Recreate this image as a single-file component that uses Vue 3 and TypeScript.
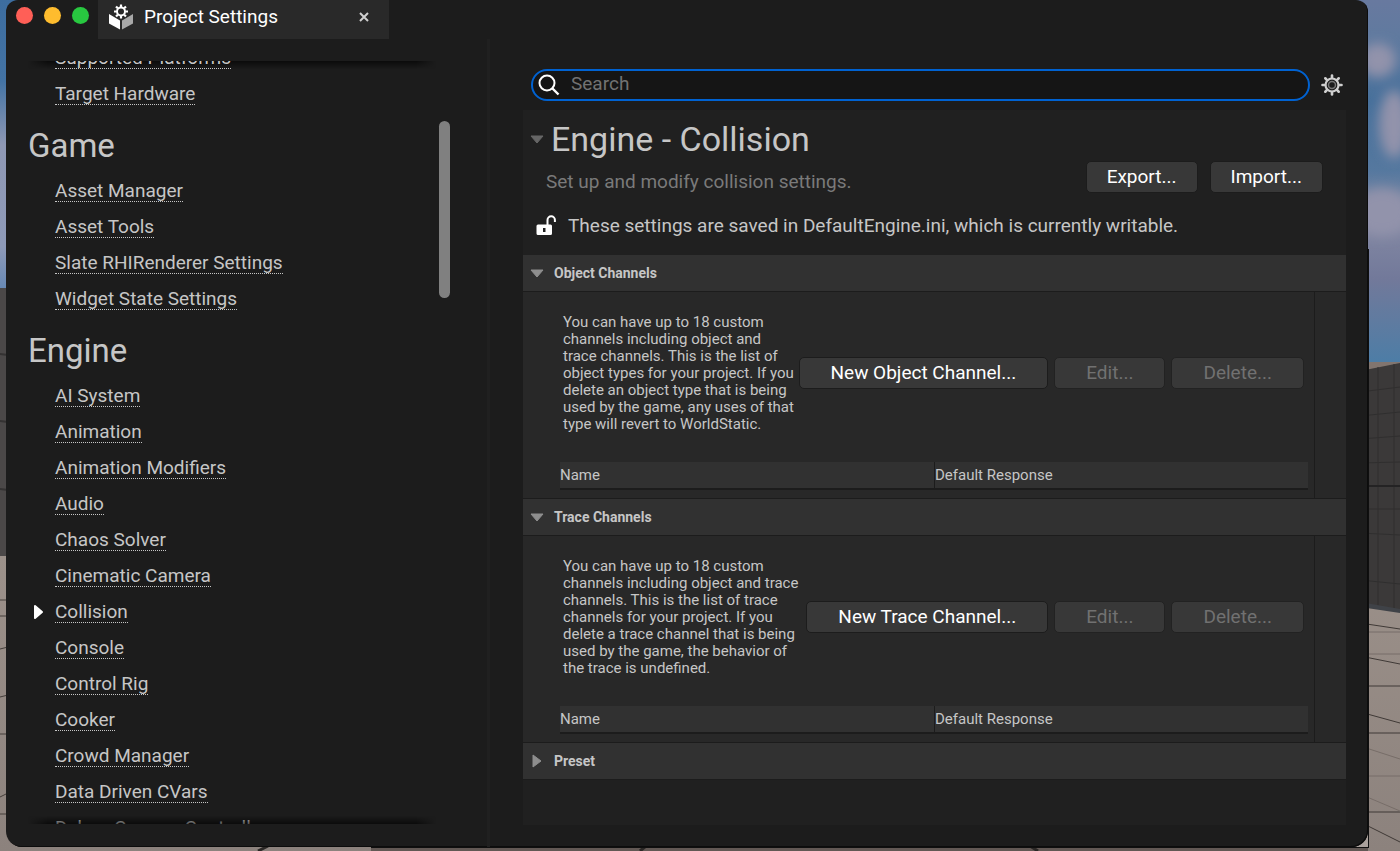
<script setup lang="ts">
import { onMounted, ref } from 'vue'

interface NavGroup {
  title: string
  items: string[]
}

interface ChannelSection {
  title: string
  description: string
  createLabel: string
}

const platformItems = ['Supported Platforms', 'Target Hardware']

const groups: NavGroup[] = [
  {
    title: 'Game',
    items: ['Asset Manager', 'Asset Tools', 'Slate RHIRenderer Settings', 'Widget State Settings'],
  },
  {
    title: 'Engine',
    items: [
      'AI System', 'Animation', 'Animation Modifiers', 'Audio', 'Chaos Solver', 'Cinematic Camera',
      'Collision', 'Console', 'Control Rig', 'Cooker', 'Crowd Manager', 'Data Driven CVars',
      'Debug Camera Controller',
    ],
  },
]

const sections: ChannelSection[] = [
  {
    title: 'Object Channels',
    description:
      'You can have up to 18 custom channels including object and trace channels. This is the list of object types for your project. If you delete an object type that is being used by the game, any uses of that type will revert to WorldStatic.',
    createLabel: 'New Object Channel...',
  },
  {
    title: 'Trace Channels',
    description:
      'You can have up to 18 custom channels including object and trace channels. This is the list of trace channels for your project. If you delete a trace channel that is being used by the game, the behavior of the trace is undefined.',
    createLabel: 'New Trace Channel...',
  },
]

const selected = ref('Collision')
const query = ref('')
const scroller = ref<HTMLElement | null>(null)
const thumb = { top: '7.8%', height: '23.2%' }

const teeth = [0, 45, 90, 135, 180, 225, 270, 315]

onMounted(() => {
  if (scroller.value) scroller.value.scrollTop = 22
})
</script>

<template>
  <div class="desktop">
    <svg class="scene" viewBox="0 0 1400 851" preserveAspectRatio="none" aria-hidden="true">
      <defs>
        <linearGradient id="skyLeft" x1="0" y1="0" x2="0" y2="1">
          <stop offset="0" stop-color="#3d6d9f" />
          <stop offset="0.28" stop-color="#4373a4" />
          <stop offset="0.5" stop-color="#8f98b4" />
          <stop offset="0.85" stop-color="#8e9ab8" />
          <stop offset="1" stop-color="#6688b4" />
        </linearGradient>
        <linearGradient id="skyRight" x1="0" y1="0" x2="0" y2="1">
          <stop offset="0" stop-color="#68799f" />
          <stop offset="0.1" stop-color="#607a9f" />
          <stop offset="0.28" stop-color="#47709b" />
          <stop offset="0.47" stop-color="#55789f" />
          <stop offset="0.6" stop-color="#858aa4" />
          <stop offset="0.77" stop-color="#72799a" />
          <stop offset="1" stop-color="#4d7da6" />
        </linearGradient>
        <linearGradient id="floor" x1="0" y1="0" x2="0" y2="1">
          <stop offset="0" stop-color="#9c918a" />
          <stop offset="1" stop-color="#8c827d" />
        </linearGradient>
        <filter id="soft" x="-50%" y="-50%" width="200%" height="200%">
          <feGaussianBlur stdDeviation="6" />
        </filter>
      </defs>
      <rect width="700" height="290" fill="url(#skyLeft)" />
      <rect y="288" width="700" height="269" fill="#4b4848" />
      <path d="M0 354l8 1M0 421l8 1M0 489l8 1" stroke="#343232" stroke-width="2" />
      <rect y="556" width="1400" height="295" fill="url(#floor)" />
      <path d="M0 600h8M0 616h8M0 649l8-2M0 697l8-2M0 734h8M0 797l8-4M0 814h8" stroke="#443e3a" stroke-width="1" />
      <rect x="700" width="700" height="362" fill="url(#skyRight)" />
      <g fill="#9293ab" filter="url(#soft)">
        <ellipse cx="1378" cy="60" rx="18" ry="17" />
        <ellipse cx="1394" cy="124" rx="15" ry="34" />
        <ellipse cx="1382" cy="212" rx="30" ry="24" />
      </g>
      <path d="M1360 362h40v3l-40 9z" fill="#81756f" />
      <path d="M1360 371l40-8v249l-40-7z" fill="#3b3939" />
      <path d="M1360 392l40-5M1360 416l40-4M1360 439l40-3M1360 463l40-1M1360 509h40M1360 533l40 2M1360 580l40 4M1378 367v239M1394 364v245" stroke="#302f2f" fill="none" />
      <path d="M1360 486h40" stroke="#242324" stroke-width="2" />
      <path d="M1360 602l40 7v4l-40-6z" fill="#3f4247" />
      <path d="M1360 623l40 6M1360 656l40 8M1360 686h40M1360 712l40 11M1360 733h40M1360 812h40M1360 822l40 20" stroke="#3f3936" fill="none" />
      <path d="M1360 632h40M1360 654h40M1360 746l40 13M1360 776h40M1360 794l40 17" stroke="#776d68" fill="none" />
      <rect x="371" y="845" width="997" height="6" fill="#625854" />
      <path d="M258 851l10-5M640 851l6-5M1030 846l8 5" stroke="#2a2725" stroke-width="3" />
      <rect x="371" y="249" width="998" height="599" fill="#0f0f0f" />
      <path d="M1354 847h14v-14z" fill="#aaa19c" />
    </svg>

    <div class="window">
      <header class="titlebar">
        <div class="lights">
          <button class="light close" type="button" aria-label="Close window"></button>
          <button class="light minimize" type="button" aria-label="Minimize window"></button>
          <button class="light maximize" type="button" aria-label="Maximize window"></button>
        </div>
        <div class="tab">
          <svg class="tab-icon" viewBox="0 0 24 26" aria-hidden="true">
            <path d="M0 10l11 6.500v9L0 19.500z" fill="#fff" />
            <path d="M24 10l-11 6.500v9l11-6z" fill="#a8a8a8" />
            <g transform="translate(12 7.500)">
              <circle r="4" fill="none" stroke="#fff" stroke-width="2" />
              <path v-for="a in teeth" :key="a" :transform="`rotate(${a})`" d="M0-4.500V-7" stroke="#fff" stroke-width="2.200" />
            </g>
          </svg>
          <span class="tab-title">Project Settings</span>
          <button class="tab-close" type="button" aria-label="Close tab">
            <svg viewBox="0 0 10 10" aria-hidden="true"><path d="M1 1l8 8M9 1l-8 8" stroke="#d0d0d0" stroke-width="2" /></svg>
          </button>
        </div>
      </header>

      <div class="body">
        <aside class="sidebar">
          <div class="list-frame">
            <nav ref="scroller" class="list" aria-label="Settings categories">
              <ul>
                <li v-for="item in platformItems" :key="item"><a href="#">{{ item }}</a></li>
              </ul>
              <section v-for="group in groups" :key="group.title">
                <h2>{{ group.title }}</h2>
                <ul>
                  <li v-for="item in group.items" :key="item">
                    <svg v-if="item === selected" class="marker" viewBox="0 0 10 16" aria-hidden="true">
                      <path d="M1 2l7 6-7 6z" fill="#fff" stroke="#fff" stroke-width="2" stroke-linejoin="round" />
                    </svg>
                    <a href="#" @click.prevent="selected = item">{{ item }}</a>
                  </li>
                </ul>
              </section>
            </nav>
          </div>
          <div class="track"><div class="thumb" :style="thumb"></div></div>
        </aside>

        <div class="divider"></div>

        <main class="main">
          <div class="search-row">
            <label class="search">
              <svg viewBox="0 0 22 22" aria-label="Search">
                <circle cx="9" cy="9" r="7.500" fill="none" stroke="#fff" stroke-width="2" />
                <path d="M14.500 14.500l6 6" stroke="#fff" stroke-width="2.400" />
              </svg>
              <input v-model="query" type="text" placeholder="Search" />
            </label>
            <button class="gear" type="button" aria-label="Settings">
              <svg viewBox="-11 -11 22 22" aria-hidden="true">
                <circle r="6.500" fill="none" stroke="#cfcfcf" stroke-width="2.200" />
                <path v-for="a in teeth" :key="a" :transform="`rotate(${a})`" d="M0-7V-9.500" stroke="#cfcfcf" stroke-width="2.600" stroke-linecap="round" />
                <circle r="3.500" fill="none" stroke="#777" stroke-width="1.500" />
              </svg>
            </button>
          </div>

          <div class="panel">
            <div class="intro">
              <div class="title">
                <svg class="arrow dim" viewBox="0 0 14 10" aria-hidden="true"><path d="M1 2h12L7 9z" /></svg>
                <h1>Engine - Collision</h1>
              </div>
              <div class="subtitle">
                <p>Set up and modify collision settings.</p>
                <div class="actions">
                  <button class="btn small" type="button">Export...</button>
                  <button class="btn small" type="button">Import...</button>
                </div>
              </div>
              <div class="notice">
                <svg viewBox="0 0 20 22" aria-hidden="true">
                  <path fill-rule="evenodd" d="M2 9.500h12.500a1.500 1.500 0 0 1 1.500 1.500v7.500a1.500 1.500 0 0 1-1.500 1.500H2a1.500 1.500 0 0 1-1.500-1.500V11A1.500 1.500 0 0 1 2 9.500zM7 13v4h2.500v-4z" fill="#fff" />
                  <path d="M11.500 10V5a3.700 3.700 0 0 1 7.400 0v2" fill="none" stroke="#fff" stroke-width="2" />
                </svg>
                <p>These settings are saved in DefaultEngine.ini, which is currently writable.</p>
              </div>
            </div>

            <section v-for="section in sections" :key="section.title">
              <button class="section-head" type="button" aria-expanded="true">
                <svg class="arrow" viewBox="0 0 14 10" aria-hidden="true"><path d="M1 2h12L7 9z" /></svg>
                <span>{{ section.title }}</span>
              </button>
              <div class="section-body">
                <div class="section-content">
                  <div class="channel-row">
                    <p>{{ section.description }}</p>
                    <div class="channel-actions">
                      <button class="btn" type="button">{{ section.createLabel }}</button>
                      <button class="btn" type="button" disabled>Edit...</button>
                      <button class="btn" type="button" disabled>Delete...</button>
                    </div>
                  </div>
                  <table>
                    <thead>
                      <tr>
                        <th scope="col">Name</th>
                        <th scope="col">Default Response</th>
                      </tr>
                    </thead>
                  </table>
                </div>
                <div class="gutter"></div>
              </div>
            </section>

            <section>
              <button class="section-head" type="button" aria-expanded="false">
                <svg class="arrow closed" viewBox="0 0 14 16" aria-hidden="true"><path d="M3 2l8 6-8 6z" /></svg>
                <span>Preset</span>
              </button>
            </section>
          </div>
        </main>
      </div>
    </div>
  </div>
</template>

<style>
body {
  margin: 0;
  background: #1c1c1c;
}
</style>

<style scoped>
* {
  box-sizing: border-box;
}

.desktop {
  position: relative;
  display: flex;
  height: 100vh;
  padding: 0 32px 4px 6px;
  overflow: hidden;
  font-family: Roboto, "Liberation Sans", sans-serif;
  font-size: 19px;
  line-height: 22px;
  color: #c6c6c6;
}

.scene {
  position: absolute;
  inset: 0;
  width: 100%;
  height: 100%;
}

.window {
  position: relative;
  display: flex;
  flex: 1;
  flex-direction: column;
  min-width: 0;
  overflow: hidden;
  background: #1c1c1c;
  border-radius: 12px 12px 16px 16px;
  box-shadow: inset -1px -1px 0 #0c0c0c;
}

h1, h2, p, ul {
  margin: 0;
  padding: 0;
  font-weight: 400;
}

ul {
  list-style: none;
}

button {
  padding: 0;
  border: 0;
  font: inherit;
  color: inherit;
  background: none;
}

.titlebar {
  display: flex;
  flex: none;
  height: 39px;
}

.lights {
  display: flex;
  gap: 11px;
  width: 92px;
  padding: 7px 0 0 10px;
}

.light {
  width: 17px;
  height: 17px;
  border-radius: 50%;
}

.close { background: #ff5f57; }
.minimize { background: #febc2e; }
.maximize { background: #28c840; }

.tab {
  display: flex;
  align-items: center;
  width: 291px;
  padding: 0 18px 6px 11px;
  background: #292929;
  color: #fff;
}

.tab-icon {
  width: 24px;
  height: 26px;
}

.tab-title {
  flex: 1;
  margin-left: 11px;
}

.tab-close {
  display: flex;
  align-items: center;
  justify-content: center;
  width: 14px;
  height: 22px;
}

.tab-close svg {
  width: 10px;
  height: 10px;
}

.body {
  display: grid;
  flex: 1;
  grid-template-columns: 481fr 3px 878fr;
  min-height: 0;
}

.divider {
  background: #202020;
}

.sidebar {
  display: flex;
  min-height: 0;
  padding: 22px 37px 23px 22px;
}

.list-frame {
  position: relative;
  display: flex;
  flex: 1;
  min-width: 0;
}

.list-frame::before,
.list-frame::after {
  position: absolute;
  right: 0;
  left: 0;
  height: 8px;
  content: "";
  pointer-events: none;
  mask-image: linear-gradient(90deg, transparent, #000 20px, #000 calc(100% - 20px), transparent);
}

.list-frame::before {
  top: 0;
  background: linear-gradient(rgba(0, 0, 0, 0.6), transparent);
}

.list-frame::after {
  bottom: 0;
  background: linear-gradient(transparent, rgba(0, 0, 0, 0.6));
}

.list {
  flex: 1;
  overflow: hidden;
}

.list h2 {
  padding: 15px 0 6px;
  font-size: 33px;
  line-height: 40px;
}

.list li {
  position: relative;
  display: flex;
  align-items: flex-start;
  height: 36px;
  padding: 9px 0 0 27px;
}

.list a {
  border-bottom: 1px dotted #c6c6c6;
  line-height: 20px;
  color: inherit;
  text-decoration: none;
}

.marker {
  position: absolute;
  top: 11px;
  left: 6px;
  width: 10px;
  height: 16px;
}

.track {
  position: relative;
  width: 11px;
  margin-left: 3px;
}

.thumb {
  position: absolute;
  width: 100%;
  border-radius: 6px;
  background: #808080;
}

.main {
  display: flex;
  flex-direction: column;
  min-width: 0;
  padding: 30px 22px 22px 33px;
}

.search-row {
  display: flex;
  gap: 11px;
  align-items: center;
  margin-bottom: 9px;
  padding: 0 3px 0 8px;
}

.search {
  display: flex;
  flex: 1;
  gap: 11px;
  align-items: center;
  height: 32px;
  padding: 0 16px 0 5px;
  border: 2px solid #0062d1;
  border-radius: 16px;
  background: #151515;
}

.search svg {
  width: 22px;
  height: 22px;
}

.search input {
  flex: 1;
  min-width: 0;
  height: 28px;
  padding: 0 0 3px;
  border: 0;
  outline: 0;
  font: inherit;
  color: #c6c6c6;
  background: none;
}

.search input::placeholder {
  color: #727272;
}

.gear {
  width: 22px;
  height: 22px;
}

.gear svg {
  display: block;
}

.panel {
  flex: 1;
  min-height: 0;
  background: #202020;
}

.intro {
  padding: 9px 23px 18px 7px;
}

.title {
  display: flex;
  align-items: center;
}

.title h1 {
  margin-left: 7px;
  font-size: 34px;
  line-height: 40px;
}

.arrow {
  flex: none;
  width: 14px;
  height: 10px;
  fill: #8e8e8e;
  stroke: #8e8e8e;
  stroke-linejoin: round;
}

.arrow.dim {
  fill: #666;
  stroke: #666;
}

.arrow.closed {
  height: 16px;
}

.subtitle {
  display: flex;
  align-items: flex-end;
  justify-content: space-between;
  margin-top: 2px;
  padding-left: 16px;
  color: #7a7a7a;
}

.actions {
  display: flex;
  gap: 12px;
}

.notice {
  display: flex;
  gap: 12px;
  align-items: center;
  margin-top: 22px;
  padding-left: 6px;
}

.notice svg {
  width: 20px;
  height: 22px;
}

.btn {
  height: 32px;
  padding: 0 31px;
  border: 1px solid #1c1c1c;
  border-radius: 5px;
  color: #fff;
  background: #383838;
  white-space: nowrap;
}

.btn.small {
  padding: 0 20px;
}

.btn:disabled {
  border-color: #222;
  color: #717171;
}

.section-head {
  display: flex;
  gap: 10px;
  align-items: center;
  width: 100%;
  height: 37px;
  padding: 0 7px;
  border-bottom: 1px solid #1c1c1c;
  background: #313131;
  font-size: 14px;
  font-weight: 700;
  text-align: left;
}

.section-body {
  display: flex;
  border-bottom: 1px solid #1c1c1c;
  background: #282828;
}

.section-content {
  flex: 1;
  min-width: 0;
  padding: 18px 6px 8px 37px;
}

.gutter {
  width: 32px;
  border-left: 1px solid #1c1c1c;
}

.channel-row {
  display: flex;
  gap: 2px;
  align-items: center;
  min-height: 128px;
  margin-bottom: 24px;
  padding: 0 4px 2px 3px;
}

.channel-row p {
  flex: 1;
  min-width: 0;
  font-size: 15px;
  line-height: 17px;
}

.channel-actions {
  display: flex;
  gap: 6px;
}

table {
  width: 100%;
  border-bottom: 2px solid #1c1c1c;
  border-spacing: 0;
  table-layout: fixed;
  background: #313131;
}

th {
  height: 26px;
  padding: 0;
  font-size: 15px;
  font-weight: 400;
  line-height: 16px;
  text-align: left;
}

th + th {
  border-left: 1px solid #1c1c1c;
}
</style>
